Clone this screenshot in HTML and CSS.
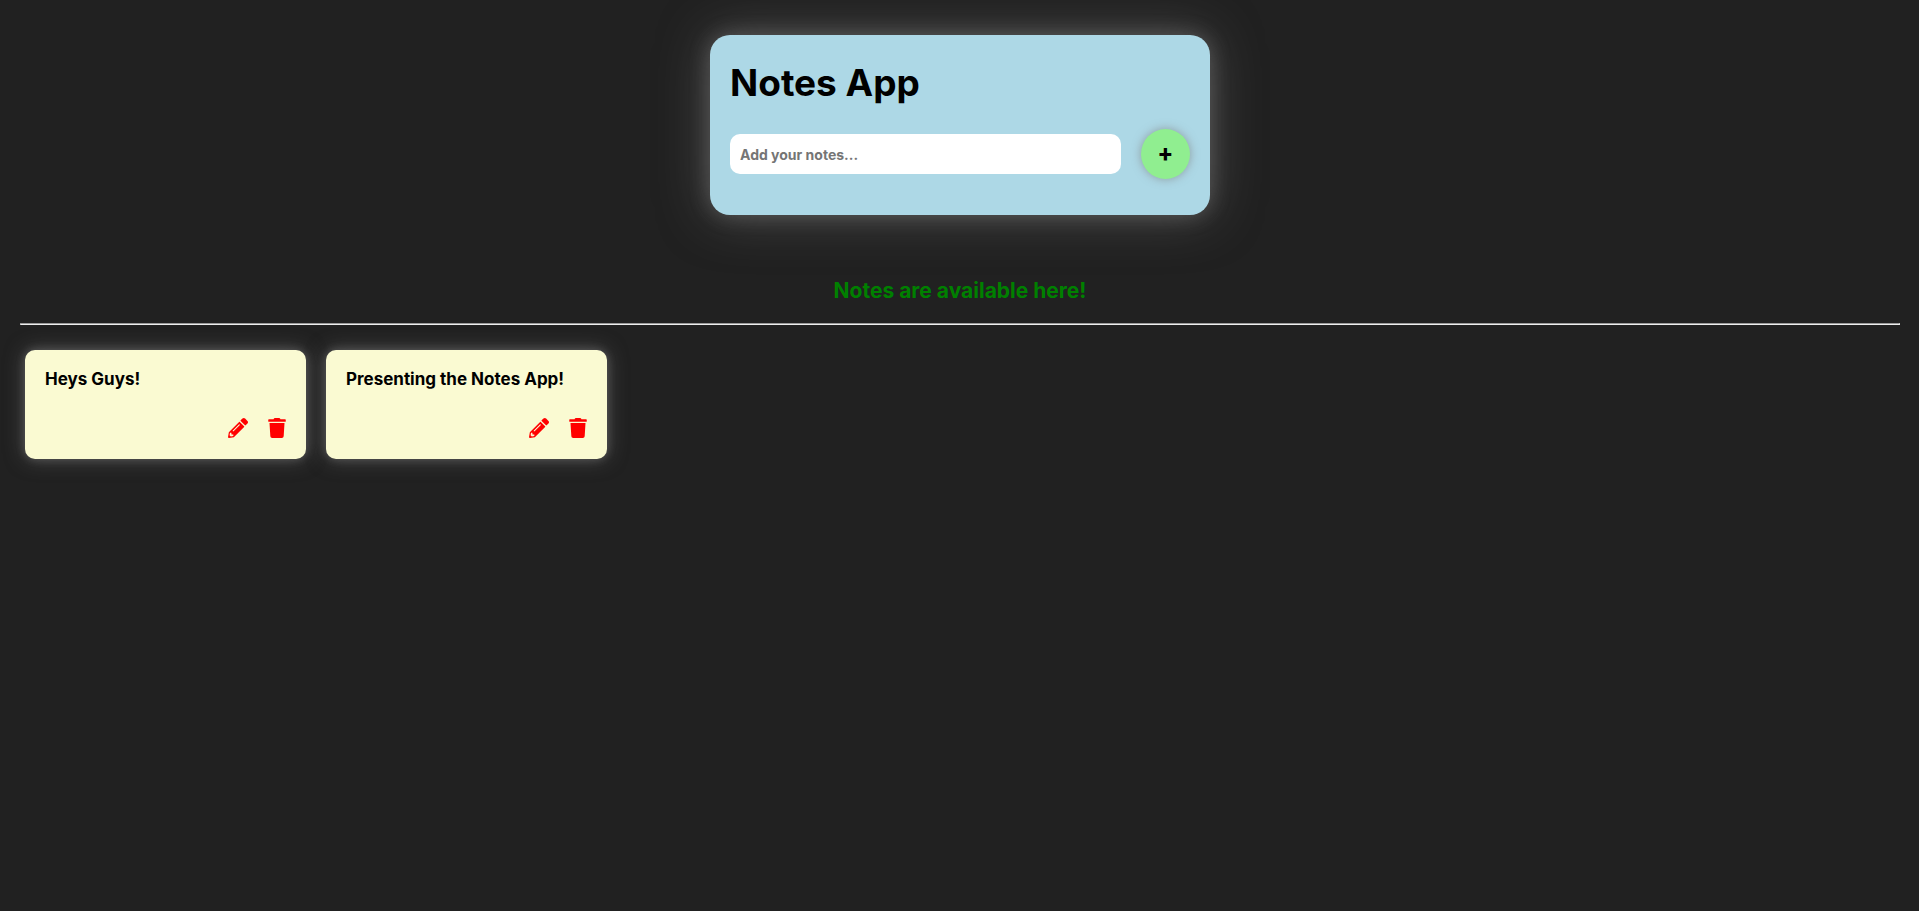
FILE: index.html
```html
<!DOCTYPE html>
<html lang="en">
<head>
<meta charset="utf-8">
<meta name="viewport" content="width=device-width, initial-scale=1">
<title>Notes App</title>
<link rel="stylesheet" href="styles.css">
</head>
<body>
<svg class="sprite" aria-hidden="true">
  <symbol id="pencil" viewBox="0 0 512 512"><path d="M497.9 142.1l-46.1 46.1c-4.7 4.7-12.3 4.7-17 0l-111-111c-4.7-4.7-4.7-12.3 0-17l46.1-46.1c18.7-18.7 49.1-18.7 67.9 0l60.1 60.1c18.8 18.7 18.8 49.1 0 67.9zM284.2 99.8L21.6 362.4.4 483.9c-2.9 16.4 11.4 30.6 27.8 27.8l121.5-21.3 262.6-262.6c4.7-4.7 4.7-12.3 0-17l-111-111c-4.8-4.7-12.4-4.7-17.1 0zM124.1 339.9c-5.5-5.5-5.5-14.3 0-19.8l154-154c5.5-5.5 14.3-5.5 19.8 0s5.5 14.3 0 19.8l-154 154c-5.5 5.5-14.3 5.5-19.8 0zM88 424h48v36.3l-64.5 11.3-31.1-31.1L51.7 376H88v48z"/></symbol>
  <symbol id="trash" viewBox="0 0 448 512"><path d="M432 32H312l-9.4-18.7A24 24 0 0 0 281.1 0H166.8a23.72 23.72 0 0 0-21.4 13.3L136 32H16A16 16 0 0 0 0 48v32a16 16 0 0 0 16 16h416a16 16 0 0 0 16-16V48a16 16 0 0 0-16-16zM53.2 467a48 48 0 0 0 47.9 45h245.8a48 48 0 0 0 47.9-45L416 128H32z"/></symbol>
</svg>
<main class="page">
  <form class="composer">
    <h1 class="title">Notes App</h1>
    <div class="entry">
      <input class="field" type="text" placeholder="Add your notes..." aria-label="Add your notes">
      <button class="add" type="button" aria-label="Add note">+</button>
    </div>
  </form>
  <h2 class="status">Notes are available here!</h2>
  <hr class="rule">
  <section class="notes" aria-label="Notes">
    <article class="note">
      <p class="text">Heys Guys!</p>
      <div class="actions">
        <button class="action" type="button" aria-label="Edit note"><svg class="pencil"><use href="#pencil"/></svg></button>
        <button class="action" type="button" aria-label="Delete note"><svg class="trash"><use href="#trash"/></svg></button>
      </div>
    </article>
    <article class="note">
      <p class="text">Presenting the Notes App!</p>
      <div class="actions">
        <button class="action" type="button" aria-label="Edit note"><svg class="pencil"><use href="#pencil"/></svg></button>
        <button class="action" type="button" aria-label="Delete note"><svg class="trash"><use href="#trash"/></svg></button>
      </div>
    </article>
  </section>
</main>
</body>
</html>
```
FILE: styles.css
```css
* {
  box-sizing: border-box;
  margin: 0;
  padding: 0;
}

body {
  background: #212121;
  color: #000;
  font-family: Inter, "Liberation Sans", sans-serif;
}

button {
  border: 0;
  cursor: pointer;
}

.sprite {
  display: none;
}

.page {
  display: flex;
  flex-direction: column;
  padding: 35px 19px 35px 20px;
}

.composer {
  display: flex;
  flex-direction: column;
  align-self: center;
  gap: 22px;
  width: 500px;
  max-width: 100%;
  padding: 24px 20px 36px;
  border-radius: 20px;
  background: lightblue;
  box-shadow: 0 0 20px #80808070, 0 0 50px #80808080;
}

.title {
  font-size: 37px;
  line-height: 48px;
  font-weight: 700;
}

.entry {
  display: flex;
  align-items: center;
  gap: 20px;
}

.field {
  flex: 1;
  min-width: 0;
  height: 40px;
  padding: 0 10px;
  border: 0;
  border-radius: 10px;
  background: #fff;
  font: 700 14px Inter, "Liberation Sans", sans-serif;
}

.field::placeholder {
  color: #757575;
}

.add {
  width: 49px;
  height: 50px;
  padding-bottom: 2px;
  border-radius: 50%;
  background: lightgreen;
  box-shadow: 0 0 10px #808080b0;
  color: #000;
  font: 800 23px Inter, "Liberation Sans", sans-serif;
}

.status {
  margin-top: 64px;
  color: green;
  font-size: 21px;
  line-height: 24px;
  font-weight: 700;
  text-align: center;
}

.rule {
  margin-top: 20px;
  border: 1px solid;
  border-color: #9a9a9a #eee #eee #9a9a9a;
}

.notes {
  display: flex;
  flex-wrap: wrap;
  gap: 20px;
  padding: 25px 5px;
}

.note {
  display: flex;
  flex-direction: column;
  gap: 29px;
  width: 15%;
  min-width: 281px;
  padding: 19px 20px 21px;
  border-radius: 10px;
  background: lightgoldenrodyellow;
  box-shadow: 0 0 8px #80808070, 0 0 20px #80808080;
}

.text {
  font-size: 17px;
  line-height: 20px;
  font-weight: 700;
}

.actions {
  display: flex;
  justify-content: flex-end;
  gap: 20px;
}

.action {
  display: flex;
  background: none;
}

.pencil,
.trash {
  width: 20px;
  height: 20px;
  fill: red;
}

.trash {
  width: 18px;
}
```
